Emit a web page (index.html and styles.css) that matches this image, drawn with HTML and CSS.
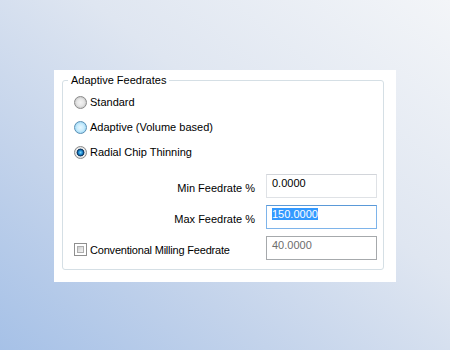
FILE: index.html
```html
<!DOCTYPE html>
<html>
<head>
<meta charset="utf-8">
<link rel="stylesheet" href="styles.css">
</head>
<body>
<div class="panel">
  <div class="group">
    <span class="legend">Adaptive Feedrates</span>
    <div class="radio-row"><span class="radio"></span><span>Standard</span></div>
    <div class="radio-row"><span class="radio hover"></span><span>Adaptive (Volume based)</span></div>
    <div class="radio-row"><span class="radio checked"></span><span>Radial Chip Thinning</span></div>
    <div class="fields">
      <div class="field">
        <span class="label">Min Feedrate %</span>
        <div class="input">0.0000</div>
      </div>
      <div class="field">
        <span class="label">Max Feedrate %</span>
        <div class="input focus"><span class="sel">150.0000</span></div>
      </div>
      <div class="field">
        <span class="check-wrap"><span class="checkbox"><span class="check-inner"></span></span><span class="check-label">Conventional Milling Feedrate</span></span>
        <div class="input disabled">40.0000</div>
      </div>
    </div>
  </div>
</div>
</body>
</html>
```

FILE: styles.css
```css
html, body {
  margin: 0;
  padding: 0;
}
body {
  width: 450px;
  height: 350px;
  overflow: hidden;
  font-family: "Liberation Sans", Arial, sans-serif;
  font-size: 11px;
  color: #000;
  background: linear-gradient(to top right, #a6c1e7 0%, #c3d3eb 30%, #dfe6f1 60%, #f3f5f8 100%);
  padding-top: 70px;
  padding-left: 54px;
  box-sizing: border-box;
}
.panel {
  width: 342px;
  height: 212px;
  background: #fff;
  padding: 10px 12px 0 8px;
  box-sizing: border-box;
}
.group {
  position: relative;
  height: 190px;
  border: 1px solid #d5dfe5;
  border-radius: 3px;
  box-sizing: border-box;
  padding: 9px 6px 0 11px;
  display: flex;
  flex-direction: column;
}
.legend {
  position: absolute;
  left: 5px;
  top: -8px;
  padding: 0 3px 0 3px;
  background: #fff;
  line-height: 14px;
  color: #000;
}
.radio-row {
  display: flex;
  align-items: center;
  height: 24px;
  margin-bottom: 1px;
}
.radio {
  width: 13px;
  height: 13px;
  border-radius: 50%;
  box-sizing: border-box;
  border: 1px solid #8a8a8a;
  background: radial-gradient(circle at 50% 50%, #f4f4f4 0%, #e6e6e6 45%, #cfcfcf 70%, #dddddd 100%);
  margin-right: 3px;
  flex: none;
}
.radio.hover {
  border-color: #5b8fb4;
  background: radial-gradient(circle at 50% 50%, #e6f6ff 0%, #c9ecfc 45%, #9fd9f6 75%, #c4e8fb 100%);
}
.radio.checked {
  border-color: #8a8a8a;
  background:
    radial-gradient(circle at 50% 50%, #7fd6fb 0px, #1d8ad0 2px, #0b3c6e 3.2px, #33506a 3.8px, transparent 4.2px),
    radial-gradient(circle at 50% 50%, #f8f8f8 0%, #eeeeee 55%, #d6d6d6 80%, #e2e2e2 100%);
}
.fields {
  margin-top: 9px;
  display: flex;
  flex-direction: column;
  gap: 7px;
}
.field {
  display: flex;
  align-items: center;
  height: 24px;
}
.label {
  flex: 1;
  text-align: right;
  padding-right: 11px;
  padding-top: 3px;
}
.input {
  width: 111px;
  height: 24px;
  box-sizing: border-box;
  border: 1px solid #dfe2e6;
  border-top-color: #d2d5da;
  padding: 2px 0 0 5px;
  line-height: 13px;
  color: #000;
  flex: none;
}
.input.focus {
  border-color: #7eb4ea;
  border-top-color: #5a99d8;
}
.sel {
  background: #3399ff;
  color: #fff;
}
.input.disabled {
  border-color: #a6a9ac;
  color: #6d6d6d;
}
.check-wrap {
  flex: 1;
  display: flex;
  align-items: center;
  padding-top: 3px;
}
.check-label {
  letter-spacing: -0.2px;
}
.checkbox {
  width: 13px;
  height: 13px;
  box-sizing: border-box;
  border: 1px solid #8f8f8f;
  background: #fff;
  padding: 2px;
  margin-right: 3px;
  flex: none;
  display: flex;
}
.check-inner {
  flex: 1;
  border: 1px solid #aeaeae;
  background: linear-gradient(135deg, #cbcbcb 0%, #e4e4e4 55%, #f2f2f2 100%);
}
```
